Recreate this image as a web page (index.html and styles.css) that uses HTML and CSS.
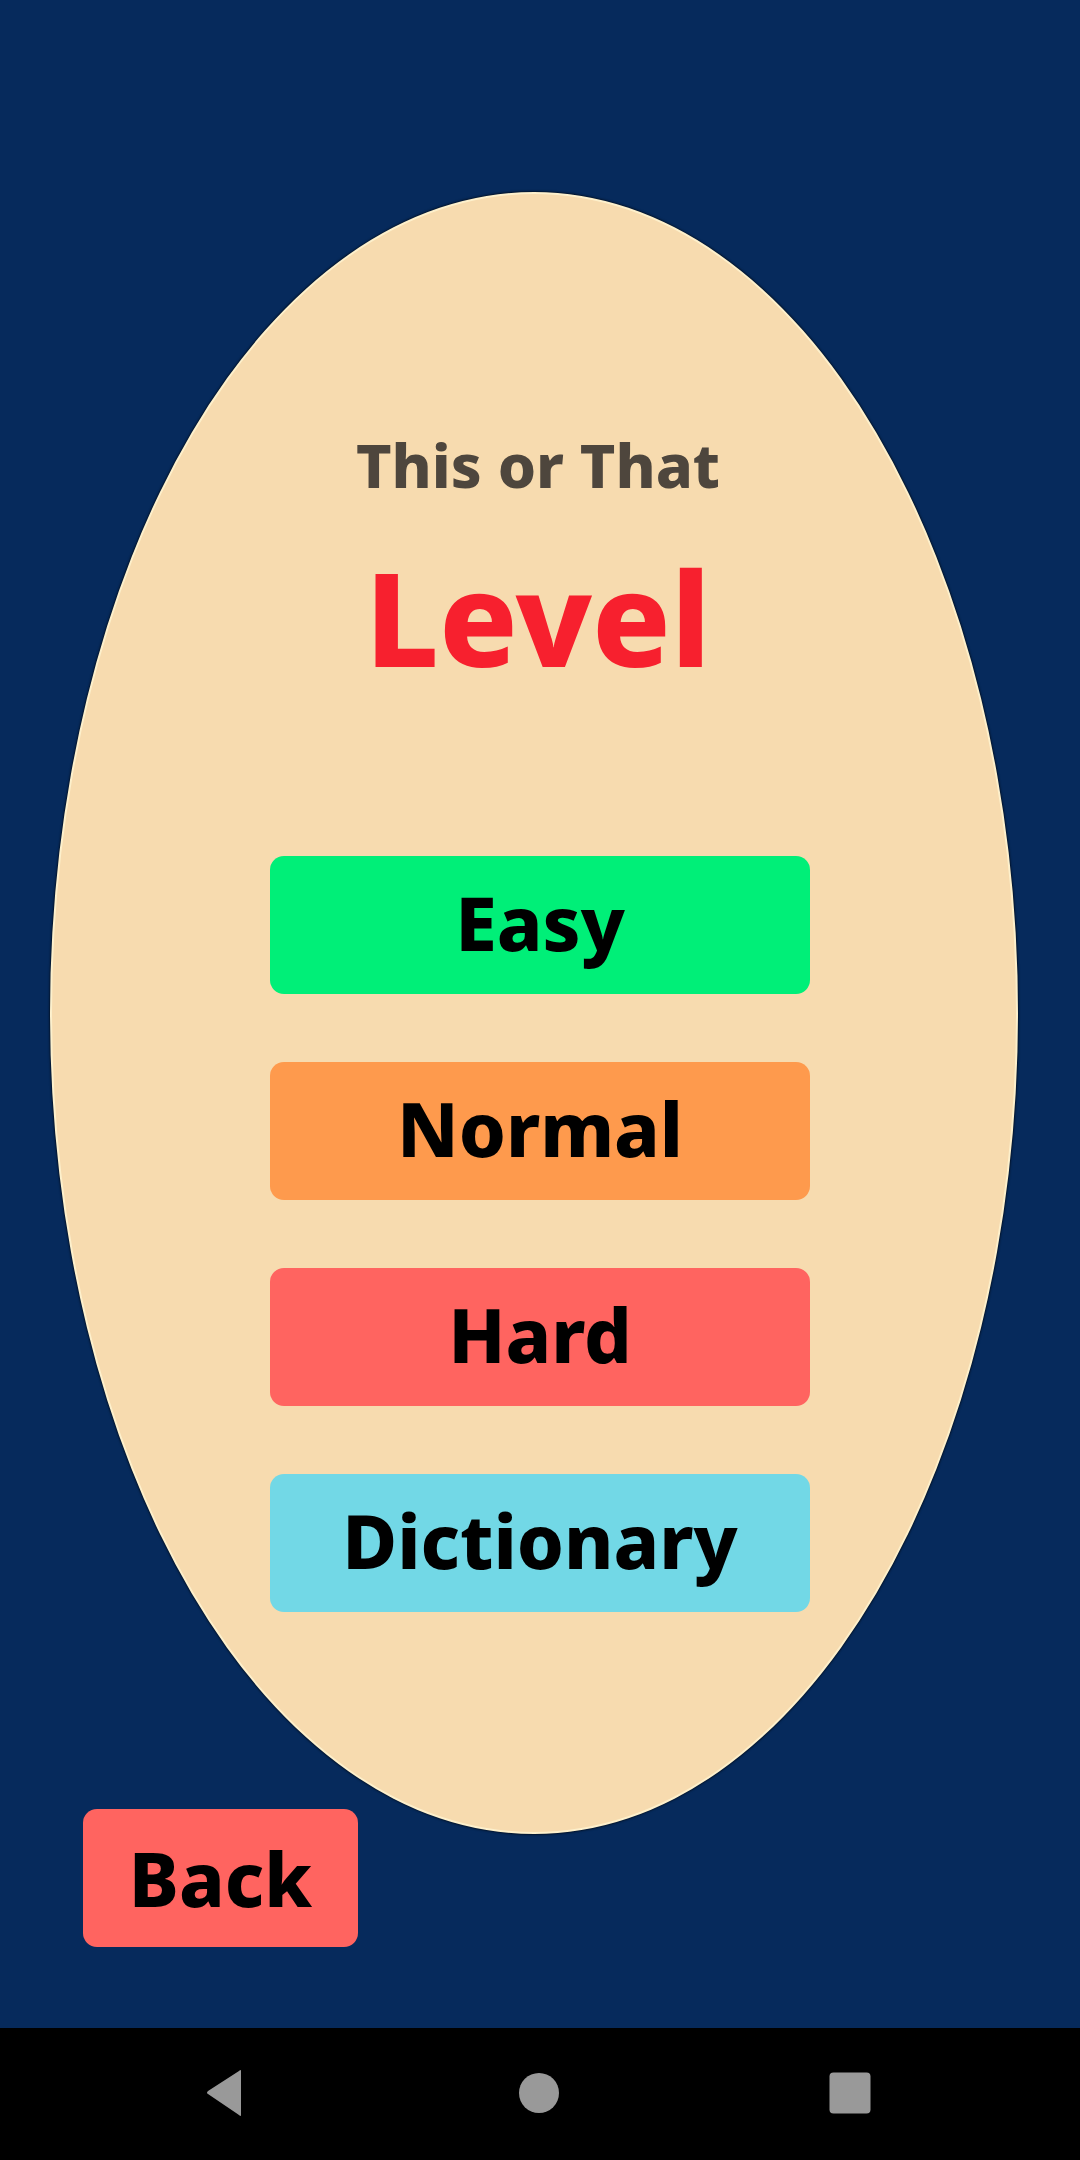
FILE: index.html
```html
<!DOCTYPE html>
<html>
<head>
<meta charset="utf-8">
<link rel="stylesheet" href="styles.css">
</head>
<body>
<div class="screen">
  <main class="app">
    <section class="oval">
      <h2 class="subtitle">This or That</h2>
      <h1 class="title">Level</h1>
      <div class="levels">
        <button class="btn easy">Easy</button>
        <button class="btn normal">Normal</button>
        <button class="btn hard">Hard</button>
        <button class="btn dict">Dictionary</button>
      </div>
    </section>
    <button class="btn back">Back</button>
  </main>
  <nav class="navbar">
    <svg class="nav-icon" width="40" height="48" viewBox="0 0 40 48"><path d="M36 2 L36 46 Q36 48 34 46 L3 25 Q1 24 3 22 L34 2 Q36 0 36 2 Z" fill="#999999"/></svg>
    <svg class="nav-icon" width="42" height="42" viewBox="0 0 42 42"><circle cx="21" cy="21" r="20" fill="#999999"/></svg>
    <svg class="nav-icon" width="42" height="42" viewBox="0 0 42 42"><rect x="0.5" y="0.5" width="41" height="41" rx="4" fill="#999999"/></svg>
  </nav>
</div>
</body>
</html>
```
FILE: styles.css
```css
* { box-sizing: border-box; }
html, body { margin: 0; padding: 0; }
body {
  width: 1080px;
  height: 2160px;
  background: #062a5c;
  font-family: "Noto Sans", "Open Sans", sans-serif;
  overflow: hidden;
}
.screen {
  display: flex;
  flex-direction: column;
  height: 2160px;
}
.app {
  height: 2028px;
  background: #062a5c;
  padding-top: 192px;
  display: flex;
  flex-direction: column;
}
.oval {
  width: 968px;
  height: 1642px;
  margin-left: 50px;
  border-radius: 50%;
  background: #f7dbaf;
  border: 2px solid #fdf0cc;
  box-shadow: 0 0 2px 1px rgba(0, 0, 0, 0.55);
  display: flex;
  flex-direction: column;
  align-items: center;
  padding-top: 240px;
}
.subtitle {
  margin: 0 0 0 8px;
  font-size: 61px;
  line-height: 1;
  font-weight: 800;
  color: #4e463d;
}
.title {
  margin: 57px 0 0 8px;
  font-size: 130px;
  line-height: 1;
  font-weight: 800;
  color: #f7202e;
}
.levels {
  margin-top: 174px;
  display: flex;
  flex-direction: column;
  gap: 68px;
  margin-left: 12px;
}
.btn {
  border: none;
  margin: 0;
  font-family: inherit;
  font-weight: 800;
  font-size: 75px;
  line-height: 1;
  color: #000;
  border-radius: 14px;
  display: flex;
  align-items: center;
  justify-content: center;
  padding: 0;
}
.levels .btn {
  width: 540px;
  height: 138px;
  padding-bottom: 6px;
}
.easy { background: #00ef78; }
.normal { background: #fe9a4d; }
.hard { background: #ff6460; }
.dict { background: #72d8e6; }
.back {
  width: 275px;
  height: 138px;
  margin-left: 83px;
  margin-top: -25px;
  background: #ff6460;
}
.navbar {
  height: 132px;
  background: #000;
  display: flex;
  align-items: center;
  padding-bottom: 2px;
}
.nav-icon:nth-child(1) { margin-left: 205px; }
.nav-icon:nth-child(2) { margin-left: 273px; }
.nav-icon:nth-child(3) { margin-left: 269px; }
```
